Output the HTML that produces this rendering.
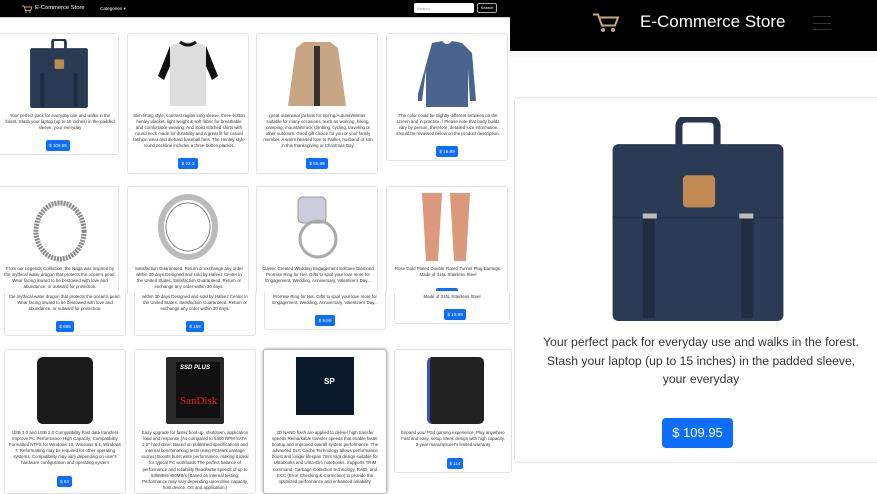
<!DOCTYPE html>
<html><head><meta charset="utf-8"><style>
*{margin:0;padding:0;box-sizing:border-box}
body{width:877px;height:491px;overflow:hidden;background:#fff;font-family:"Liberation Sans",sans-serif;position:relative}
.a{position:absolute}
.card{position:absolute;border:1px solid #e3e3e3;border-radius:3px;background:#fff}
.t{position:absolute;font-size:4.4px;line-height:6.1px;color:#333;text-align:center}
.b{position:absolute;background:#0d6efd;color:#fff;font-size:4.6px;border-radius:2px;text-align:center;line-height:11px;height:11px}
.img{position:absolute}
</style></head><body>
<!-- left header -->
<div class="a" style="left:0;top:0;width:510px;height:17px;background:#000"></div>
<div class="a" style="left:0;top:17px;width:510px;height:1px;background:#ccc"></div>
<svg class="a" style="left:22px;top:5px" width="10" height="8" viewBox="0 0 10 8"><path d="M0 1h2l1.5 4.5h5L10 2H3" fill="none" stroke="#c9a77a" stroke-width="1"/><circle cx="4" cy="7" r=".8" fill="#c9a77a"/><circle cx="8" cy="7" r=".8" fill="#c9a77a"/></svg>
<div class="a" style="left:35px;top:5px;color:#fff;font-size:5.8px">E-Commerce Store</div>
<div class="a" style="left:100px;top:5.5px;color:#fff;font-size:4.6px">Categories ▾</div>
<div class="a" style="left:414px;top:3px;width:60px;height:10px;background:#fff;border-radius:2px;font-size:4px;color:#999;padding:2.5px 3px">Search</div>
<div class="a" style="left:477px;top:3px;width:20px;height:10px;border:1px solid #aaa;border-radius:2px;font-size:4px;color:#fff;text-align:center;line-height:8px">Search</div>

<!-- row1 -->
<div class="card" style="left:-2px;top:33px;width:121px;height:122px"></div>
<div class="card" style="left:127px;top:33px;width:122px;height:141px"></div>
<div class="card" style="left:256px;top:33px;width:122px;height:141px"></div>
<div class="card" style="left:386px;top:33px;width:122px;height:128px"></div>
<svg class="img" style="left:29px;top:39px" width="60" height="69" viewBox="0 0 170 203"><path d="M66 28V10q0-8 8-8h22q8 0 8 8v18" fill="none" stroke="#28344d" stroke-width="8"/><rect x="0" y="27" width="170" height="176" rx="6" fill="#2b3a55"/><rect x="72" y="60" width="28" height="28" rx="3" fill="#c08a52"/><rect x="30" y="100" width="12" height="100" fill="#222c42"/><rect x="128" y="100" width="12" height="100" fill="#222c42"/></svg>
<div class="t" style="left:4px;top:113px;width:112px">Your perfect pack for everyday use and walks in the forest. Stash your laptop (up to 15 inches) in the padded sleeve, your everyday</div>
<div class="b" style="left:46px;top:140px;width:24px">$ 109.95</div>
<svg class="img" style="left:158px;top:40px" width="60" height="68" viewBox="0 0 60 68"><path d="M12 6 22 2h16l10 4 12 30-6 4-6-14v40H12V26L6 40 0 36z" fill="#ddd"/><path d="M12 6 0 36l6 4 6-14z M48 6l12 30-6 4-6-14z" fill="#111"/><path d="M22 2q8 6 16 0" fill="none" stroke="#111" stroke-width="3"/></svg>
<div class="t" style="left:133px;top:113px;width:112px">Slim-fitting style, contrast raglan long sleeve, three-button henley placket, light weight &amp; soft fabric for breathable and comfortable wearing. And Solid stitched shirts with round neck made for durability and a great fit for casual fashion wear and diehard baseball fans. The Henley style round neckline includes a three-button placket.</div>
<div class="b" style="left:178px;top:158px;width:20px">$ 22.3</div>
<svg class="img" style="left:288px;top:40px" width="58" height="68" viewBox="0 0 58 68"><path d="M16 2h26l8 6 8 58H40V40 66H18V40 66H0L8 8z" fill="#c8a583"/><path d="M26 6h6v60h-6z" fill="#333"/></svg>
<div class="t" style="left:262px;top:113px;width:112px">great outerwear jackets for Spring/Autumn/Winter, suitable for many occasions, such as working, hiking, camping, mountain/rock climbing, cycling, traveling or other outdoors. Good gift choice for you or your family member. A warm hearted love to Father, husband or son in this thanksgiving or Christmas Day.</div>
<div class="b" style="left:306px;top:158px;width:22px">$ 55.99</div>
<svg class="img" style="left:418px;top:39px" width="58" height="68" viewBox="0 0 58 68"><path d="M14 4 24 2q5 6 10 0l10 2 10 10 4 48h-6L50 30v38H8V30L4 62h-6z" fill="#4a6490"/></svg>
<div class="t" style="left:392px;top:113px;width:112px">The color could be slightly different between on the screen and in practice. / Please note that body builds vary by person, therefore, detailed size information should be reviewed below on the product description.</div>
<div class="b" style="left:436px;top:146px;width:22px">$ 15.99</div>

<!-- row2 top -->
<div class="card" style="left:-2px;top:186px;width:121px;height:110px"></div>
<div class="card" style="left:127px;top:186px;width:122px;height:110px"></div>
<div class="card" style="left:256px;top:186px;width:122px;height:110px"></div>
<div class="card" style="left:386px;top:186px;width:122px;height:110px"></div>
<svg class="img" style="left:30px;top:193px" width="60" height="70" viewBox="0 0 60 70"><ellipse cx="30" cy="38" rx="24" ry="28" fill="none" stroke="#888" stroke-width="5" stroke-dasharray="2 1"/></svg>
<svg class="img" style="left:158px;top:193px" width="60" height="68" viewBox="0 0 60 68"><ellipse cx="30" cy="34" rx="27" ry="30" fill="none" stroke="#bbb" stroke-width="6"/><ellipse cx="30" cy="34" rx="22" ry="24" fill="none" stroke="#888" stroke-width="1"/></svg>
<svg class="img" style="left:288px;top:193px" width="60" height="68" viewBox="0 0 60 68"><rect x="10" y="4" width="28" height="26" rx="5" fill="#ccd" stroke="#999"/><ellipse cx="30" cy="46" rx="18" ry="18" fill="none" stroke="#aaa" stroke-width="3"/></svg>
<svg class="img" style="left:416px;top:193px" width="60" height="68" viewBox="0 0 60 68"><path d="M6 0h20l-4 68H10z M34 0h20l-4 68H38z" fill="#d9997a"/></svg>
<div class="t" style="left:4px;top:266px;width:112px">From our Legends Collection, the Naga was inspired by the mythical water dragon that protects the ocean's pearl. Wear facing inward to be bestowed with love and abundance, or outward for protection.</div>
<div class="t" style="left:133px;top:266px;width:112px">Satisfaction Guaranteed. Return or exchange any order within 30 days.Designed and sold by Hafeez Center in the United States. Satisfaction Guaranteed. Return or exchange any order within 30 days.</div>
<div class="t" style="left:262px;top:266px;width:112px">Classic Created Wedding Engagement Solitaire Diamond Promise Ring for Her. Gifts to spoil your love more for Engagement, Wedding, Anniversary, Valentine's Day...</div>
<div class="t" style="left:392px;top:266px;width:112px">Rose Gold Plated Double Flared Tunnel Plug Earrings. Made of 316L Stainless Steel</div>
<div class="b" style="left:436px;top:288px;width:22px"></div>
<!-- row2 lower band -->
<div class="a" style="left:0;top:293px;width:510px;height:45px;background:#fff"></div>
<div class="card" style="left:4px;top:291px;width:122px;height:45px;border-top:none"></div>
<div class="card" style="left:134px;top:291px;width:122px;height:45px;border-top:none"></div>
<div class="card" style="left:264px;top:291px;width:122px;height:39px;border-top:none"></div>
<div class="card" style="left:394px;top:291px;width:116px;height:33px;border-top:none"></div>
<div class="t" style="left:9px;top:294px;width:112px">the mythical water dragon that protects the ocean's pearl. Wear facing inward to be bestowed with love and abundance, or outward for protection.</div>
<div class="t" style="left:139px;top:294px;width:112px">within 30 days Designed and sold by Hafeez Center in the United States. Satisfaction Guaranteed. Return or exchange any order within 30 days.</div>
<div class="t" style="left:269px;top:294px;width:112px">Promise Ring for Her. Gifts to spoil your love more for Engagement, Wedding, Anniversary, Valentine's Day...</div>
<div class="t" style="left:399px;top:294px;width:106px">Made of 316L Stainless Steel</div>
<div class="b" style="left:56px;top:321px;width:18px">$ 695</div>
<div class="b" style="left:186px;top:321px;width:18px">$ 168</div>
<div class="b" style="left:315px;top:315px;width:20px">$ 9.99</div>
<div class="b" style="left:444px;top:309px;width:22px">$ 10.99</div>

<!-- row3 -->
<div class="card" style="left:4px;top:349px;width:122px;height:145px"></div>
<div class="card" style="left:134px;top:349px;width:122px;height:145px"></div>
<div class="card" style="left:263px;top:349px;width:124px;height:145px;border:1px solid #bbb;box-shadow:0 0 3px #999"></div>
<div class="card" style="left:394px;top:349px;width:118px;height:124px"></div>
<div class="img" style="left:37px;top:357px;width:56px;height:67px;background:#1a1a1a;border-radius:6px"></div>
<div class="img" style="left:166px;top:357px;width:58px;height:67px;background:#2a2a2a;border-radius:2px"><div class="a" style="left:10px;top:5px;width:44px;height:56px;background:#111"></div><div class="a" style="left:14px;top:8px;color:#fff;font-size:6px;font-style:italic;font-weight:bold">SSD PLUS</div><div class="a" style="left:14px;top:38px;color:#d22;font-size:11px;font-family:'Liberation Serif',serif">SanDisk</div></div>
<div class="img" style="left:296px;top:357px;width:58px;height:67px;background:#0b1a2a"><div class="a" style="left:28px;top:20px;color:#fff;font-size:8px;font-weight:bold">SP</div><div class="a" style="left:0;top:58px;width:58px;height:9px;background:#fff"></div></div>
<div class="img" style="left:427px;top:357px;width:57px;height:67px;background:#222;border-left:3px solid #3a4fc0;border-radius:5px"></div>
<div class="t" style="left:9px;top:430px;width:112px">USB 3.0 and USB 2.0 Compatibility Fast data transfers Improve PC Performance High Capacity; Compatibility Formatted NTFS for Windows 10, Windows 8.1, Windows 7; Reformatting may be required for other operating systems; Compatibility may vary depending on user's hardware configuration and operating system</div>
<div class="b" style="left:57px;top:476px;width:15px">$ 64</div>
<div class="t" style="left:139px;top:430px;width:112px">Easy upgrade for faster boot up, shutdown, application load and response (As compared to 5400 RPM SATA 2.5" hard drive; Based on published specifications and internal benchmarking tests using PCMark vantage scores) Boosts burst write performance, making it ideal for typical PC workloads The perfect balance of performance and reliability Read/write speeds of up to 535MB/s/450MB/s (Based on internal testing; Performance may vary depending upon drive capacity, host device, OS and application.)</div>
<div class="t" style="left:269px;top:430px;width:112px">3D NAND flash are applied to deliver high transfer speeds Remarkable transfer speeds that enable faster bootup and improved overall system performance. The advanced SLC Cache Technology allows performance boost and longer lifespan 7mm slim design suitable for Ultrabooks and Ultra-slim notebooks. Supports TRIM command, Garbage Collection technology, RAID, and ECC (Error Checking &amp; Correction) to provide the optimized performance and enhanced reliability.</div>
<div class="t" style="left:399px;top:430px;width:108px">Expand your PS4 gaming experience, Play anywhere Fast and easy, setup Sleek design with high capacity, 3-year manufacturer's limited warranty</div>
<div class="b" style="left:447px;top:458px;width:16px">$ 114</div>

<!-- right mobile -->
<div class="a" style="left:510px;top:0;width:367px;height:51px;background:#000"></div>
<div class="a" style="left:510px;top:51px;width:367px;height:7px;background:#f8f8f8"></div>
<svg class="a" style="left:593px;top:13px" width="26" height="20" viewBox="0 0 26 20"><path d="M0 1.5h5l4 11h13l3-8H7" fill="none" stroke="#c9a77a" stroke-width="2"/><circle cx="10" cy="17" r="2" fill="#c9a77a"/><circle cx="20" cy="17" r="2" fill="#c9a77a"/></svg>
<div class="a" style="left:640px;top:12px;color:#fff;font-size:17px">E-Commerce Store</div>
<div class="a" style="left:813px;top:16px;width:18px;height:14px;border-top:1px solid #333;border-bottom:1px solid #333"><div class="a" style="left:0;top:6px;width:18px;height:1px;background:#333"></div></div>
<div class="card" style="left:514px;top:97px;width:370px;height:366px;border-radius:5px"></div>
<svg class="img" style="left:612px;top:117px" width="172" height="204" viewBox="0 0 170 203"><path d="M66 28V10q0-8 8-8h22q8 0 8 8v18" fill="none" stroke="#28344d" stroke-width="7"/><rect x="0" y="27" width="170" height="176" rx="6" fill="#2b3a55"/><path d="M0 100h170" stroke="#24324b" stroke-width="2"/><rect x="70" y="58" width="32" height="32" rx="4" fill="#c08a52"/><rect x="30" y="100" width="12" height="100" fill="#222c42"/><rect x="128" y="100" width="12" height="100" fill="#222c42"/><rect x="30" y="96" width="14" height="5" fill="#bbb"/><rect x="126" y="96" width="14" height="5" fill="#bbb"/></svg>
<div class="a" style="left:520px;top:333px;width:362px;text-align:center;font-size:12.2px;line-height:18.5px;color:#333">Your perfect pack for everyday use and walks in the forest.<br>Stash your laptop (up to 15 inches) in the padded sleeve,<br>your everyday</div>
<div class="a" style="left:662px;top:418px;width:71px;height:30px;background:#0d6efd;border-radius:4px;color:#fff;font-size:13px;text-align:center;line-height:30px">$ 109.95</div>
</body></html>
